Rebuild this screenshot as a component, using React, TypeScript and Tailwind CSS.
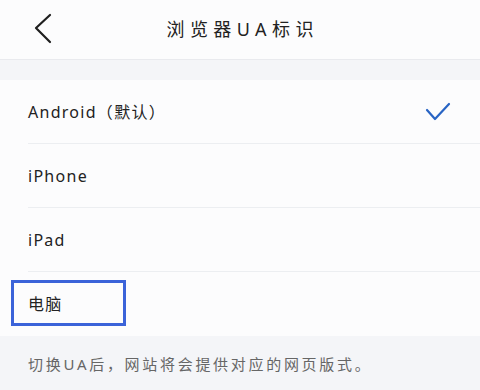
const rows = [
  { label: "Android（默认）", checked: true },
  { label: "iPhone" },
  { label: "iPad" },
  { label: "电脑", boxed: true },
];

const font = { fontFamily: '"Noto Sans", "Noto Sans CJK SC", sans-serif' };

export default function App() {
  return (
    <div className="w-[480px] h-[390px] overflow-hidden bg-[#f4f5f8] text-[#222]" style={font}>
      <header className="h-[60px] bg-[#fcfcfd] border-b border-[#e9eaee] grid grid-cols-[80px_1fr_80px] items-center">
        <button aria-label="back" className="pl-[34px] pb-[2px]">
          <svg width="20" height="32" viewBox="0 0 20 32" fill="none">
            <polyline points="16,2 2,15 16,29" stroke="#1f1f1f" strokeWidth="2.2" strokeLinecap="round" strokeLinejoin="round" />
          </svg>
        </button>
        <h1 className="text-center text-[18px] tracking-[0.3em] pl-[0.3em] font-normal">浏览器UA标识</h1>
      </header>

      <ul className="mt-[20px] bg-[#fcfcfd]">
        {rows.map((r, i) => (
          <li key={r.label} className="relative pl-[28px]">
            <div
              className={
                "h-[64px] flex items-center pr-[28px] " +
                (i < rows.length - 1 ? "border-b border-[#eceef1]" : "")
              }
            >
              <span className="text-[16px] tracking-[0.08em]">{r.label}</span>
              {r.checked && (
                <svg className="ml-auto" width="28" height="22" viewBox="0 0 28 22" fill="none">
                  <polyline points="3,9 11,18 25,3" stroke="#2864c4" strokeWidth="2.2" strokeLinecap="round" strokeLinejoin="round" />
                </svg>
              )}
            </div>
            {r.boxed && (
              <div className="absolute left-[11px] top-[8px] w-[115px] h-[46px] border-[3px] border-[#3b63d9]" />
            )}
          </li>
        ))}
      </ul>

      <p className="pl-[28px] pt-[17px] text-[15px] tracking-[0.18em] text-[#666]">
        切换UA后，网站将会提供对应的网页版式。
      </p>
    </div>
  );
}
